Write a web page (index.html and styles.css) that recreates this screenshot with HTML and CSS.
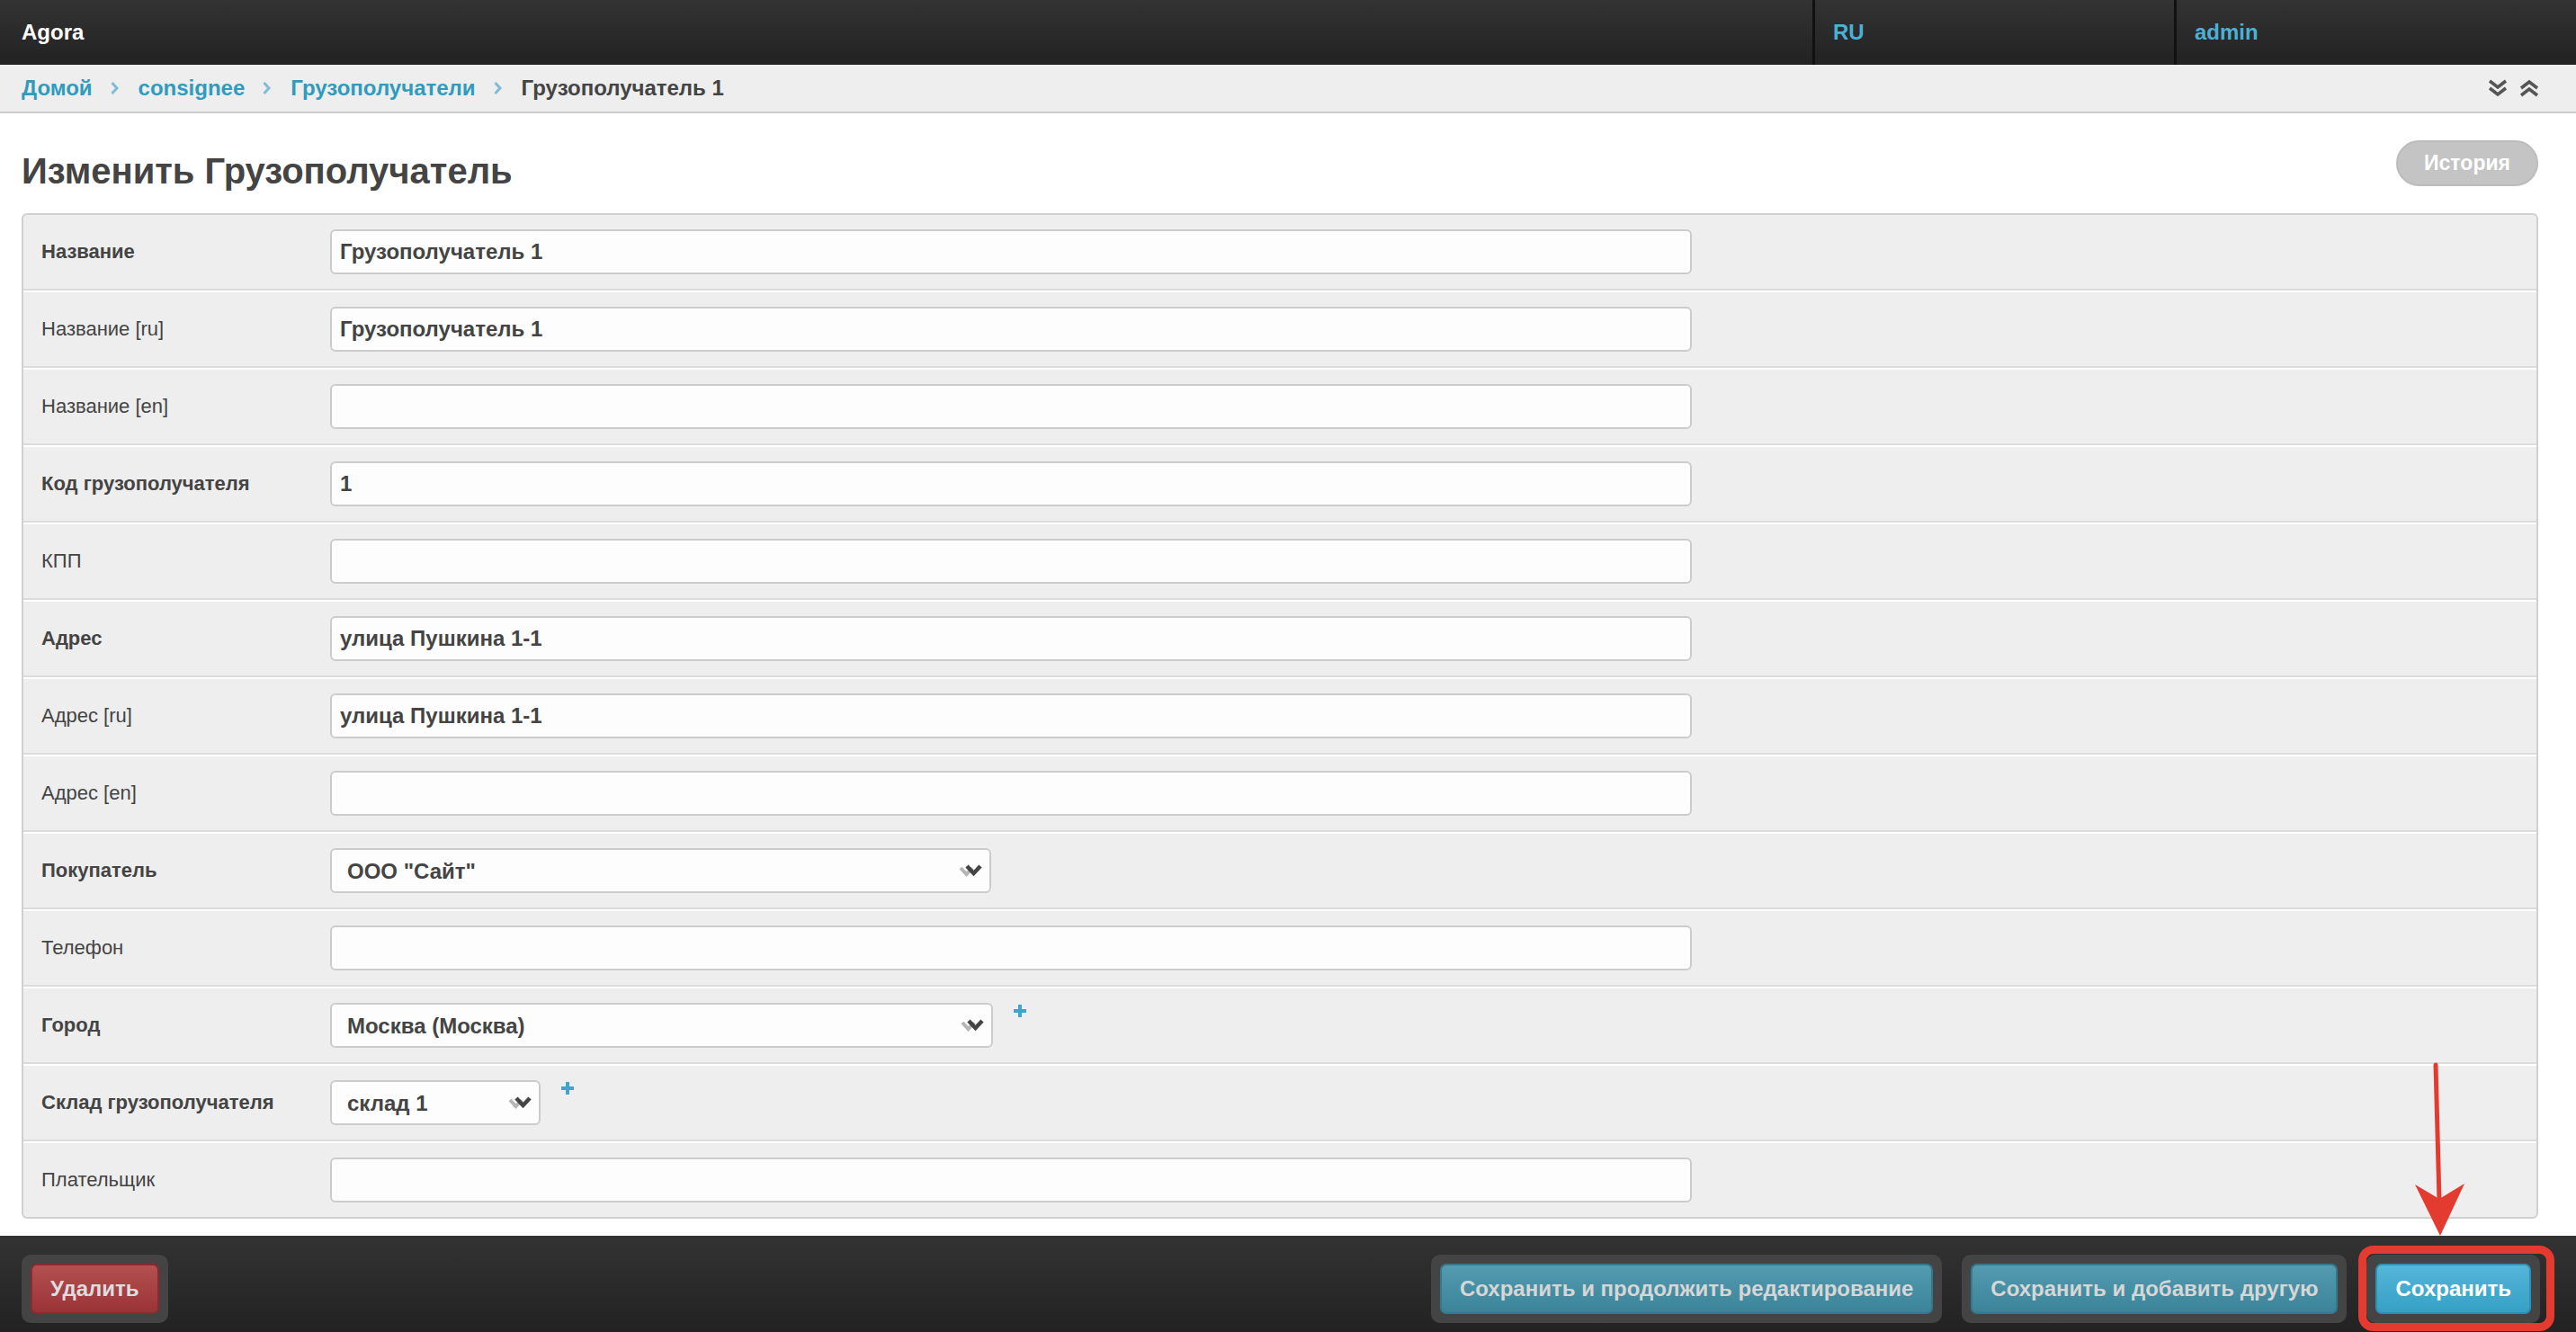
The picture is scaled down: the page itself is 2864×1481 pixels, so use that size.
FILE: index.html
```html
<!DOCTYPE html>
<html lang="ru">
<head>
  <meta charset="UTF-8">
  <title>Изменить Грузополучатель | Agora</title>
  <link rel="stylesheet" href="styles.css">
</head>
<body>
  <header class="header">
    <div class="brand">Agora</div>
    <a class="nav-item nav-lang" href="#">RU</a>
    <a class="nav-item nav-user" href="#">admin</a>
  </header>

  <nav class="breadcrumbs">
    <a href="#">Домой</a>
    <svg class="sep" width="9" height="14" viewBox="0 0 9 14"><polyline points="1.5,1 7,7 1.5,13" fill="none" stroke="#7dbdd7" stroke-width="3"/></svg>
    <a href="#">consignee</a>
    <svg class="sep" width="9" height="14" viewBox="0 0 9 14"><polyline points="1.5,1 7,7 1.5,13" fill="none" stroke="#7dbdd7" stroke-width="3"/></svg>
    <a href="#">Грузополучатели</a>
    <svg class="sep" width="9" height="14" viewBox="0 0 9 14"><polyline points="1.5,1 7,7 1.5,13" fill="none" stroke="#7dbdd7" stroke-width="3"/></svg>
    <span class="current">Грузополучатель 1</span>
    <div class="tools">
      <svg width="22" height="20" viewBox="0 0 22 20"><polyline points="2,2 11,9 20,2" fill="none" stroke="#555" stroke-width="3.5"/><polyline points="2,10 11,17 20,10" fill="none" stroke="#555" stroke-width="3.5"/></svg>
      <svg width="22" height="20" viewBox="0 0 22 20"><polyline points="2,10 11,3 20,10" fill="none" stroke="#555" stroke-width="3.5"/><polyline points="2,18 11,11 20,18" fill="none" stroke="#555" stroke-width="3.5"/></svg>
    </div>
  </nav>

  <main class="content">
    <div class="title-row">
      <h1>Изменить Грузополучатель</h1>
      <a class="history" href="#">История</a>
    </div>

    <form class="module">
      <div class="row">
        <label class="required">Название</label>
        <input class="field" type="text" value="Грузополучатель 1">
      </div>
      <div class="row">
        <label>Название [ru]</label>
        <input class="field" type="text" value="Грузополучатель 1">
      </div>
      <div class="row">
        <label>Название [en]</label>
        <input class="field" type="text" value="">
      </div>
      <div class="row">
        <label class="required">Код грузополучателя</label>
        <input class="field" type="text" value="1">
      </div>
      <div class="row">
        <label>КПП</label>
        <input class="field" type="text" value="">
      </div>
      <div class="row">
        <label class="required">Адрес</label>
        <input class="field" type="text" value="улица Пушкина 1-1">
      </div>
      <div class="row">
        <label>Адрес [ru]</label>
        <input class="field" type="text" value="улица Пушкина 1-1">
      </div>
      <div class="row">
        <label>Адрес [en]</label>
        <input class="field" type="text" value="">
      </div>
      <div class="row">
        <label class="required">Покупатель</label>
        <div class="select select-wide">
          <select><option>ООО "Сайт"</option></select>
          <svg width="28" height="16" viewBox="0 0 28 16"><polyline points="2,5 8.5,12 15,5" fill="none" stroke="#b5b5b5" stroke-width="4"/><polyline points="9,3 16.5,11 24,3" fill="none" stroke="#444" stroke-width="4.5"/></svg>
        </div>
      </div>
      <div class="row">
        <label>Телефон</label>
        <input class="field" type="text" value="">
      </div>
      <div class="row">
        <label class="required">Город</label>
        <div class="select select-city">
          <select><option>Москва (Москва)</option></select>
          <svg width="28" height="16" viewBox="0 0 28 16"><polyline points="2,5 8.5,12 15,5" fill="none" stroke="#b5b5b5" stroke-width="4"/><polyline points="9,3 16.5,11 24,3" fill="none" stroke="#444" stroke-width="4.5"/></svg>
        </div>
        <a class="add" href="#"><svg width="14" height="14" viewBox="0 0 14 14"><path d="M7 0V14M0 7H14" stroke="#3ea6ca" stroke-width="4"/></svg></a>
      </div>
      <div class="row">
        <label class="required">Склад грузополучателя</label>
        <div class="select select-small">
          <select><option>склад 1</option></select>
          <svg width="28" height="16" viewBox="0 0 28 16"><polyline points="2,5 8.5,12 15,5" fill="none" stroke="#b5b5b5" stroke-width="4"/><polyline points="9,3 16.5,11 24,3" fill="none" stroke="#444" stroke-width="4.5"/></svg>
        </div>
        <a class="add" href="#"><svg width="14" height="14" viewBox="0 0 14 14"><path d="M7 0V14M0 7H14" stroke="#3ea6ca" stroke-width="4"/></svg></a>
      </div>
      <div class="row">
        <label>Плательщик</label>
        <input class="field" type="text" value="">
      </div>
    </form>
  </main>

  <footer class="footer">
    <div class="btn-wrap"><button class="btn btn-delete">Удалить</button></div>
    <div class="btn-wrap push"><button class="btn btn-second">Сохранить и продолжить редактирование</button></div>
    <div class="btn-wrap"><button class="btn btn-second">Сохранить и добавить другую</button></div>
    <div class="btn-wrap"><button class="btn btn-save">Сохранить</button></div>
  </footer>

  <!-- annotation drawn over the screenshot -->
  <svg class="annotation" width="2864" height="1481" viewBox="0 0 2864 1481">
    <line x1="2708" y1="1184" x2="2712" y2="1335" stroke="#e43b30" stroke-width="5" stroke-linecap="round"/>
    <polygon points="2685,1317 2712,1333 2740,1316 2713,1374" fill="#e43b30"/>
    <rect x="2626.5" y="1389.5" width="209" height="86" rx="12" fill="none" stroke="#e43b30" stroke-width="9"/>
  </svg>
</body>
</html>
```

FILE: styles.css
```css
* {
  box-sizing: border-box;
}
body {
  margin: 0;
  height: 100vh;
  overflow: hidden;
  display: flex;
  flex-direction: column;
  position: relative;
  font-family: 'Liberation Sans', Arial, sans-serif;
  color: #444;
  background: #fff;
}
a {
  text-decoration: none;
}

/* header */
.header {
  height: 72px;
  flex: none;
  display: flex;
  background: linear-gradient(#333, #222);
}
.brand {
  flex: 1;
  display: flex;
  align-items: center;
  padding-left: 24px;
  color: #fff;
  font-size: 24px;
  font-weight: bold;
}
.nav-item {
  display: flex;
  align-items: center;
  padding-left: 20px;
  border-left: 3px solid #111;
  color: #4cb0d6;
  font-size: 24px;
  font-weight: bold;
}
.nav-lang {
  width: 402px;
}
.nav-user {
  width: 447px;
}

/* breadcrumbs */
.breadcrumbs {
  height: 54px;
  flex: none;
  display: flex;
  align-items: center;
  padding: 0 41px 0 24px;
  background: #eee;
  border-bottom: 2px solid #ccc;
  font-size: 24px;
  font-weight: bold;
}
.breadcrumbs a {
  color: #309bbf;
}
.breadcrumbs .sep {
  margin: 0 22px 0 20px;
}
.breadcrumbs .current {
  color: #444;
}
.tools {
  margin-left: auto;
  display: flex;
  gap: 13px;
}

/* content */
.content {
  flex: 1;
  padding: 0 42px 0 24px;
}
.title-row {
  display: flex;
  justify-content: space-between;
  align-items: flex-start;
  margin: 30px 0 23px;
}
h1 {
  margin: 11px 0 0;
  font-size: 40px;
  line-height: 47px;
  font-weight: bold;
}
.history {
  height: 51px;
  display: flex;
  align-items: center;
  padding: 0 29px;
  border: 2px solid #bcbcbc;
  border-radius: 26px;
  background: #c4c4c4;
  color: #fff;
  font-size: 23px;
  font-weight: bold;
}

.module {
  margin: 0;
  background: #eee;
  border: 2px solid #d0d0d0;
  border-radius: 6px;
}
.row {
  display: flex;
  align-items: center;
  padding: 16px 20px;
  border-top: 2px solid #fff;
  border-bottom: 2px solid #dcdcdc;
}
.row:first-child {
  border-top: 0;
}
.row:last-child {
  border-bottom: 0;
}
.row label {
  width: 321px;
  flex: none;
  font-size: 22px;
}
.row label.required {
  font-weight: bold;
}
.field {
  width: 1514px;
  height: 50px;
  padding: 0 9px;
  border: 2px solid #ccc;
  border-radius: 6px;
  background: #fdfdfd;
  font-family: 'Liberation Sans', Arial, sans-serif;
  font-size: 24px;
  font-weight: bold;
  color: #444;
  outline: none;
}

.select {
  height: 50px;
  display: flex;
  align-items: center;
  padding: 0 6px 0 17px;
  border: 2px solid #ccc;
  border-radius: 6px;
  background: #fdfdfd;
}
.select select {
  flex: 1;
  min-width: 0;
  appearance: none;
  border: 0;
  padding: 0;
  background: transparent;
  font-family: 'Liberation Sans', Arial, sans-serif;
  font-size: 24px;
  font-weight: bold;
  color: #444;
  outline: none;
}
.select-wide {
  width: 735px;
}
.select-city {
  width: 737px;
}
.select-small {
  width: 234px;
}
.add {
  align-self: flex-start;
  margin: 2px 0 0 23px;
  line-height: 0;
}

/* footer */
.footer {
  height: 107px;
  flex: none;
  display: flex;
  align-items: flex-start;
  gap: 22px;
  padding: 21px 40px 0 24px;
  background: linear-gradient(#333, #222);
}
.btn-wrap {
  padding: 10px;
  border-radius: 10px;
  background: #444;
}
.btn-wrap.push {
  margin-left: auto;
}
.btn {
  height: 56px;
  padding: 0 20px;
  border: 2px solid;
  border-radius: 7px;
  font-family: 'Liberation Sans', Arial, sans-serif;
  font-size: 24px;
  font-weight: bold;
  cursor: pointer;
}
.btn-delete {
  background: linear-gradient(#b45050, #9a3337);
  border-color: #8b2b2d;
  color: #ddd;
}
.btn-second {
  background: linear-gradient(#549bb0, #3a8398);
  border-color: #35788c;
  color: #d6d6d6;
}
.btn-save {
  background: linear-gradient(#55b6d9, #35a0c5);
  border-color: #2f90b3;
  color: #fff;
}

.annotation {
  position: absolute;
  top: 0;
  left: 0;
  pointer-events: none;
}
```
